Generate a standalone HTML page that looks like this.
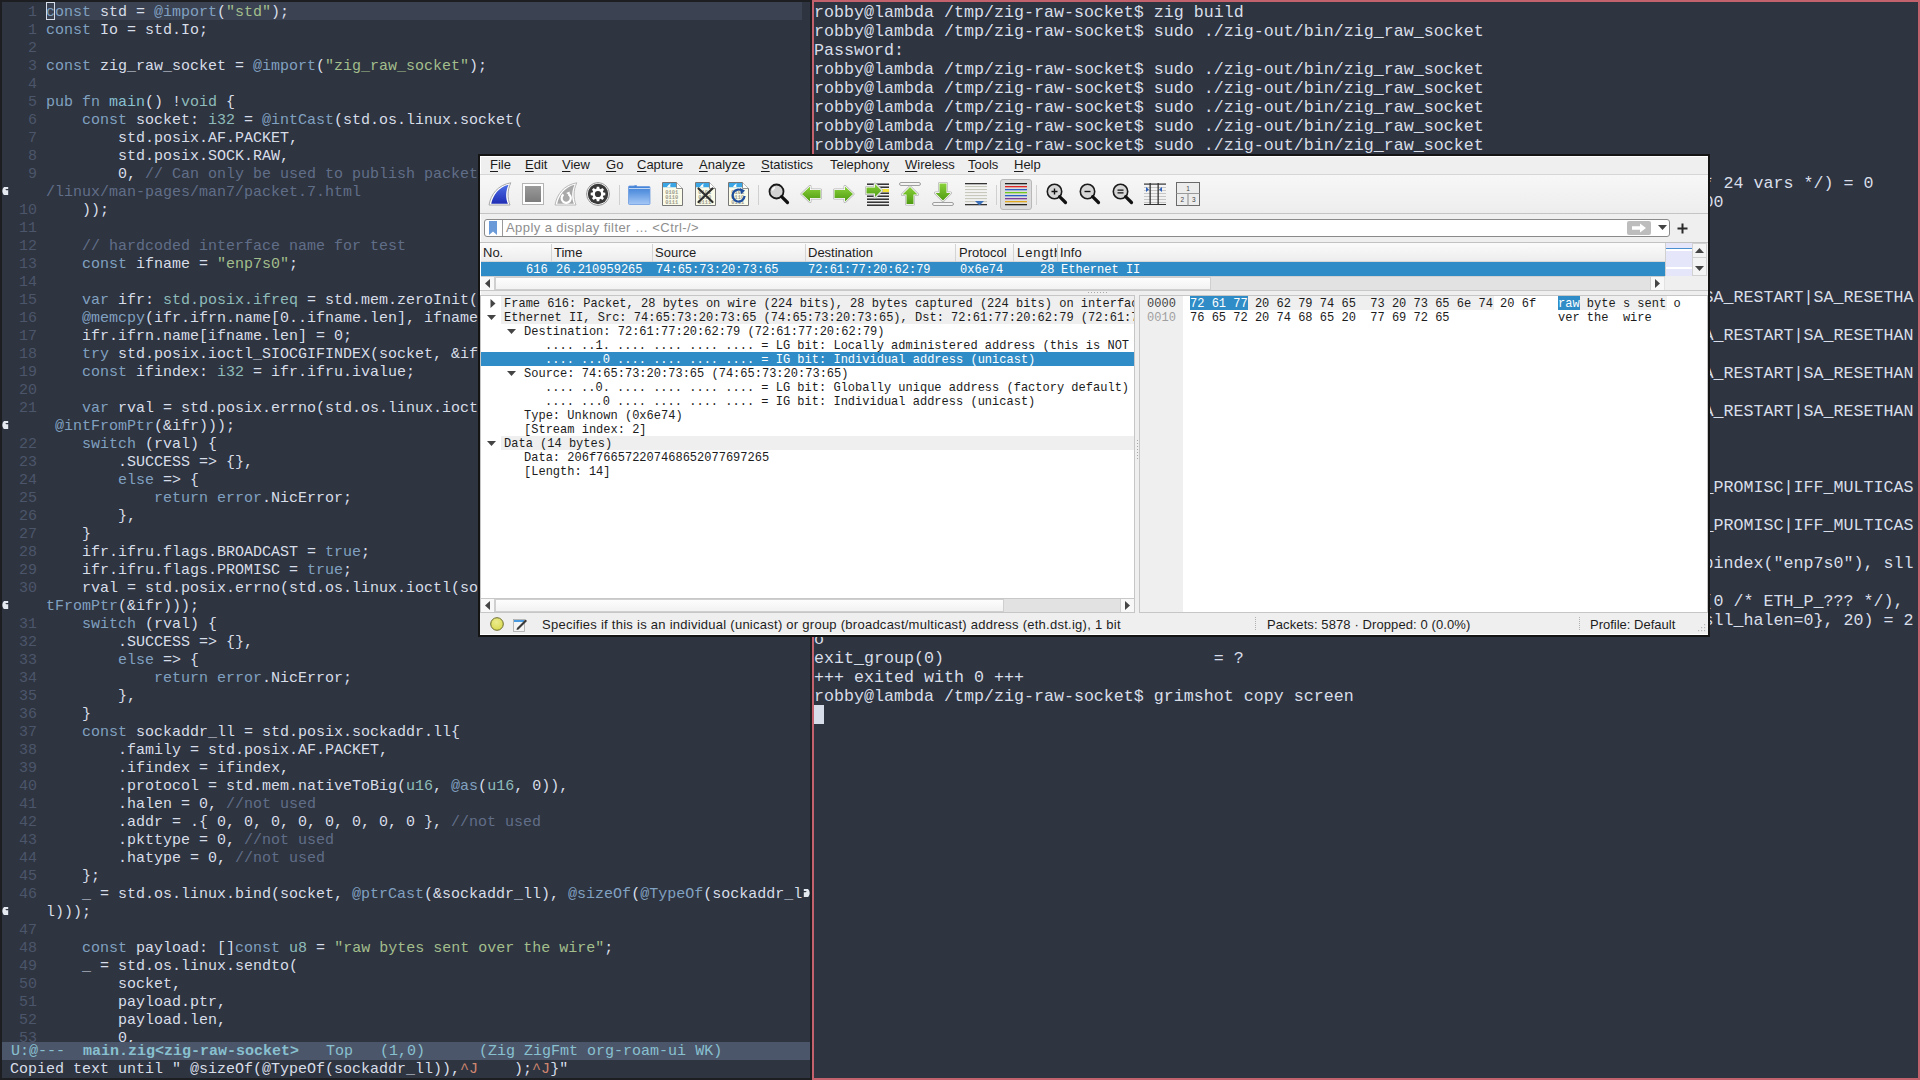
<!DOCTYPE html>
<html><head><meta charset="utf-8"><style>
*{margin:0;padding:0;box-sizing:border-box}
html,body{width:1920px;height:1080px;overflow:hidden;background:#1c1e22}
body{position:relative}
#emacs{position:absolute;left:2px;top:2px;width:808px;height:1076px;background:#2e3440;overflow:hidden}
#emacs .hl{position:absolute;left:44px;top:0;width:756px;height:18px;background:#3b4252}
#emacs .lnum{position:absolute;left:8px;top:2px;width:27px;text-align:right;white-space:pre;font:15px/18px "Liberation Mono",monospace;color:#4c566a}
#emacs .code{position:absolute;left:44px;top:2px;white-space:pre;font:15px/18px "Liberation Mono",monospace;color:#d8dee9}
.k{color:#81a1c1}.b{color:#81a1c1}.f{color:#88c0d0}.t{color:#8fbcbb}.s{color:#a3be8c}.c{color:#616e88}
.frl{position:absolute;left:0;width:8px;height:18px}
.frr{position:absolute;left:800px;width:8px;height:18px}
#emacs .cursor{position:absolute;left:44px;top:0;width:9px;height:18px;border:1px solid #d8dee9}
#emacs .modeline{position:absolute;left:0;top:1040px;width:808px;height:18px;background:#4c566a;color:#88c0d0;white-space:pre;font:15px/18px "Liberation Mono",monospace;padding-top:1px}
#emacs .modeline b{font-weight:bold}
#emacs .echo{position:absolute;left:8px;top:1059px;white-space:pre;font:15px/18px "Liberation Mono",monospace;color:#d8dee9}
#emacs .echo .o{color:#d08770}
#term{position:absolute;left:812px;top:0;width:1108px;height:1080px;background:#2e3440;border:2px solid #c3626c;overflow:hidden}
#term .tt{position:absolute;left:0;top:1px;white-space:pre;font:16.667px/19px "Liberation Mono",monospace;color:#d8dee9}
#term .tcur{position:absolute;left:0;top:703px;width:10px;height:19px;background:#d8dee9}

#ws{position:absolute;left:478px;top:154px;width:1232px;height:483px;background:#141414}
.a{position:absolute}
.ws-in{position:absolute;left:2px;top:2px;width:1228px;height:479px;background:#efefef;overflow:hidden;border-left:1px solid #fff;border-top:1px solid #fff}
.menu{font:13px/18px "Liberation Sans",sans-serif;color:#1c1c1c;white-space:pre}
.menu u{text-decoration:underline;text-underline-offset:1.5px;text-decoration-thickness:1px}
.hdr{font:13px/18px "Liberation Sans",sans-serif;color:#1c1c1c;white-space:pre}
.mono{font:12.03px/14px "Liberation Mono",monospace;white-space:pre;color:#1c1c1c}
.st{font:13px/22px "Liberation Sans",sans-serif;color:#1c1c1c;white-space:pre}
</style></head><body>
<div id="emacs">
<div class="hl"></div>
<div class="lnum">1
1
2
3
4
5
6
7
8
9

10
11
12
13
14
15
16
17
18
19
20
21

22
23
24
25
26
27
28
29
30

31
32
33
34
35
36
37
38
39
40
41
42
43
44
45
46

47
48
49
50
51
52
53</div>
<div class="code"><span class="k">const</span> std = <span class="b">@import</span>(<span class="s">&quot;std&quot;</span>);
<span class="k">const</span> Io = std.Io;

<span class="k">const</span> zig_raw_socket = <span class="b">@import</span>(<span class="s">&quot;zig_raw_socket&quot;</span>);

<span class="k">pub</span> <span class="k">fn</span> <span class="f">main</span>() !<span class="t">void</span> {
    <span class="k">const</span> socket: <span class="t">i32</span> = <span class="b">@intCast</span>(std.os.linux.socket(
        std.posix.AF.PACKET,
        std.posix.SOCK.RAW,
        0, <span class="c">// Can only be used to publish packets. See man7 dot org website /man</span>
<span class="c">/linux/man-pages/man7/packet.7.html</span>
    ));

    <span class="c">// hardcoded interface name for test</span>
    <span class="k">const</span> ifname = <span class="s">&quot;enp7s0&quot;</span>;

    <span class="k">var</span> ifr: <span class="t">std.posix.ifreq</span> = std.mem.zeroInit(std.posix.ifreq, .{});
    <span class="b">@memcpy</span>(ifr.ifrn.name[0..ifname.len], ifname);
    ifr.ifrn.name[ifname.len] = 0;
    <span class="k">try</span> std.posix.ioctl_SIOCGIFINDEX(socket, &amp;ifr);
    <span class="k">const</span> ifindex: <span class="t">i32</span> = ifr.ifru.ivalue;

    <span class="k">var</span> rval = std.posix.errno(std.os.linux.ioctl(socket, std.os.linux.SIOCGIFFLAGS,
 <span class="b">@intFromPtr</span>(&amp;ifr)));
    <span class="k">switch</span> (rval) {
        .SUCCESS =&gt; {},
        <span class="k">else</span> =&gt; {
            <span class="k">return</span> <span class="k">error</span>.NicError;
        },
    }
    ifr.ifru.flags.BROADCAST = <span class="k">true</span>;
    ifr.ifru.flags.PROMISC = <span class="k">true</span>;
    rval = std.posix.errno(std.os.linux.ioctl(socket, std.os.linux.SIOCSIFFLAGS, <span class="b">@in</span>
<span class="b">tFromPtr</span>(&amp;ifr)));
    <span class="k">switch</span> (rval) {
        .SUCCESS =&gt; {},
        <span class="k">else</span> =&gt; {
            <span class="k">return</span> <span class="k">error</span>.NicError;
        },
    }
    <span class="k">const</span> sockaddr_ll = std.posix.sockaddr.ll{
        .family = std.posix.AF.PACKET,
        .ifindex = ifindex,
        .protocol = std.mem.nativeToBig(<span class="t">u16</span>, <span class="b">@as</span>(<span class="t">u16</span>, 0)),
        .halen = 0, <span class="c">//not used</span>
        .addr = .{ 0, 0, 0, 0, 0, 0, 0, 0 }, <span class="c">//not used</span>
        .pkttype = 0, <span class="c">//not used</span>
        .hatype = 0, <span class="c">//not used</span>
    };
    _ = std.os.linux.bind(socket, <span class="b">@ptrCast</span>(&amp;sockaddr_ll), <span class="b">@sizeOf</span>(<span class="b">@TypeOf</span>(sockaddr_l
l)));

    <span class="k">const</span> payload: []<span class="k">const</span> <span class="t">u8</span> = <span class="s">&quot;raw bytes sent over the wire&quot;</span>;
    _ = std.os.linux.sendto(
        socket,
        payload.ptr,
        payload.len,
        0,</div>
<div class="frl" style="top:180px"><svg width="8" height="18"><path d="M2 5 H6.2 V6.9 H2.9 Q4 7.3 4.8 8.4 L6.2 7.9 V13 H1.8 Q0.3 11.2 0.3 9 Q0.3 6.6 2 5 Z" fill="#e5e9f0"/></svg></div>
<div class="frl" style="top:414px"><svg width="8" height="18"><path d="M2 5 H6.2 V6.9 H2.9 Q4 7.3 4.8 8.4 L6.2 7.9 V13 H1.8 Q0.3 11.2 0.3 9 Q0.3 6.6 2 5 Z" fill="#e5e9f0"/></svg></div>
<div class="frl" style="top:594px"><svg width="8" height="18"><path d="M2 5 H6.2 V6.9 H2.9 Q4 7.3 4.8 8.4 L6.2 7.9 V13 H1.8 Q0.3 11.2 0.3 9 Q0.3 6.6 2 5 Z" fill="#e5e9f0"/></svg></div>
<div class="frl" style="top:900px"><svg width="8" height="18"><path d="M2 5 H6.2 V6.9 H2.9 Q4 7.3 4.8 8.4 L6.2 7.9 V13 H1.8 Q0.3 11.2 0.3 9 Q0.3 6.6 2 5 Z" fill="#e5e9f0"/></svg></div>
<div class="frr" style="top:882px"><svg width="8" height="18"><path d="M6 5 H1.8 V6.9 H5.1 Q4 7.3 3.2 8.4 L1.8 7.9 V13 H6.2 Q7.7 11.2 7.7 9 Q7.7 6.6 6 5 Z" fill="#e5e9f0"/></svg></div>
<div class="cursor"></div>
<div class="modeline"> U:@---  <b>main.zig&lt;zig-raw-socket&gt;</b>   Top   (1,0)      (Zig ZigFmt org-roam-ui WK)</div>
<div class="echo">Copied text until " @sizeOf(@TypeOf(sockaddr_ll)),<span class="o">^J</span>    );<span class="o">^J</span>}"</div>
</div>
<div id="term"><div class="tt">robby@lambda /tmp/zig-raw-socket$ zig build
robby@lambda /tmp/zig-raw-socket$ sudo ./zig-out/bin/zig_raw_socket
Password:
robby@lambda /tmp/zig-raw-socket$ sudo ./zig-out/bin/zig_raw_socket
robby@lambda /tmp/zig-raw-socket$ sudo ./zig-out/bin/zig_raw_socket
robby@lambda /tmp/zig-raw-socket$ sudo ./zig-out/bin/zig_raw_socket
robby@lambda /tmp/zig-raw-socket$ sudo ./zig-out/bin/zig_raw_socket
robby@lambda /tmp/zig-raw-socket$ sudo ./zig-out/bin/zig_raw_socket

                                                                                        /* 24 vars */) = 0
                                                                                         00




                                                                                         SA_RESTART|SA_RESETHA

                                                                                        SA_RESTART|SA_RESETHAN

                                                                                        SA_RESTART|SA_RESETHAN

                                                                                        SA_RESTART|SA_RESETHAN



                                                                                        F_PROMISC|IFF_MULTICAS

                                                                                        F_PROMISC|IFF_MULTICAS

                                                                                        ypindex(&quot;enp7s0&quot;), sll

                                                                                        s(0 /* ETH_P_??? */),
                                                                                        {sll_halen=0}, 20) = 2
o
exit_group(0)                           = ?
+++ exited with 0 +++
robby@lambda /tmp/zig-raw-socket$ grimshot copy screen</div><div class="tcur"></div></div>
<div id="ws"></div>
<div class="a" style="left:480px;top:156px;width:1228px;height:479px;background:#efefef;border-left:1px solid #fff;border-top:1px solid #fff"></div>
<div class="a menu" style="left:490px;top:156px;"><u>F</u>ile</div>
<div class="a menu" style="left:525px;top:156px;"><u>E</u>dit</div>
<div class="a menu" style="left:562px;top:156px;"><u>V</u>iew</div>
<div class="a menu" style="left:606px;top:156px;"><u>G</u>o</div>
<div class="a menu" style="left:637px;top:156px;"><u>C</u>apture</div>
<div class="a menu" style="left:699px;top:156px;"><u>A</u>nalyze</div>
<div class="a menu" style="left:761px;top:156px;"><u>S</u>tatistics</div>
<div class="a menu" style="left:830px;top:156px;">Telephon<u>y</u></div>
<div class="a menu" style="left:905px;top:156px;"><u>W</u>ireless</div>
<div class="a menu" style="left:968px;top:156px;"><u>T</u>ools</div>
<div class="a menu" style="left:1014px;top:156px;"><u>H</u>elp</div>
<div class="a" style="left:480px;top:174px;width:1228px;height:1px;background:#d6d6d6"></div>
<div class="a" style="left:480px;top:175px;width:1228px;height:38px;background:linear-gradient(#f7f7f7,#ededed)"></div>
<div class="a" style="left:480px;top:213px;width:1228px;height:1px;background:#c4c4c4"></div>
<svg class="a" style="left:0;top:0" width="1" height="1"><defs>
<linearGradient id="gblue" x1="0" y1="0" x2="0" y2="1"><stop offset="0" stop-color="#4d6ee6"/><stop offset="1" stop-color="#1f2db4"/></linearGradient>
<linearGradient id="ggrey" x1="0" y1="0" x2="0" y2="1"><stop offset="0" stop-color="#9a9a9a"/><stop offset="1" stop-color="#7c7c7c"/></linearGradient>
<linearGradient id="gfold" x1="0" y1="0" x2="0" y2="1"><stop offset="0" stop-color="#3d7fd6"/><stop offset="0.35" stop-color="#5b95e0"/><stop offset="1" stop-color="#a6c8f5"/></linearGradient>
<linearGradient id="ggreen" x1="0" y1="0" x2="0" y2="1"><stop offset="0" stop-color="#8ad23a"/><stop offset="1" stop-color="#4e9a12"/></linearGradient>
<linearGradient id="gtb" x1="0" y1="0" x2="0" y2="1"><stop offset="0" stop-color="#f8f8f8"/><stop offset="1" stop-color="#ececec"/></linearGradient>
</defs></svg>
<svg class="a" style="left:488px;top:182px" width="24" height="24" viewBox="0 0 24 24"><path d="M1 23 C3 12 10 3 22.8 0.8 C19.3 8 19.3 16 22 23 Z" fill="#fff" stroke="#a8a8a8" stroke-width="1"/><path d="M3.2 21.8 C5 13 11 5 20.6 2.8 C17.6 9 17.4 16 19.9 21.8 Z" fill="url(#gblue)"/></svg>
<svg class="a" style="left:522px;top:183px" width="22" height="22" viewBox="0 0 22 22"><rect x="0.5" y="0.5" width="21" height="21" fill="#fff" stroke="#b4b4b4"/><rect x="3" y="3" width="16" height="16" fill="url(#ggrey)"/></svg>
<svg class="a" style="left:554px;top:182px" width="24" height="24" viewBox="0 0 24 24"><path d="M1 23 C3 12 10 3 22.8 0.8 C19.3 8 19.3 16 22 23 Z" fill="#fff" stroke="#b8b8b8" stroke-width="1"/><path d="M3.2 21.8 C5 13 11 5 20.6 2.8 C17.6 9 17.4 16 19.9 21.8 Z" fill="#a9a9a9"/><path d="M9.5 12.5 A4.6 4.6 0 1 0 14.5 12.2" stroke="#fff" stroke-width="2.2" fill="none"/><path d="M12.2 11 L15.6 9.6 L15.8 13.6 Z" fill="#fff"/></svg>
<svg class="a" style="left:586px;top:182px" width="24" height="24" viewBox="0 0 24 24"><circle cx="12" cy="12" r="11.4" fill="#fff" stroke="#8a8a8a" stroke-width="0.9"/><circle cx="12" cy="12" r="10.2" fill="#383838"/><path d="M17.41 10.56 L19.29 10.75 L19.29 13.25 L17.41 13.44 L16.84 14.81 L18.04 16.27 L16.27 18.04 L14.81 16.84 L13.44 17.41 L13.25 19.29 L10.75 19.29 L10.56 17.41 L9.19 16.84 L7.73 18.04 L5.96 16.27 L7.16 14.81 L6.59 13.44 L4.71 13.25 L4.71 10.75 L6.59 10.56 L7.16 9.19 L5.96 7.73 L7.73 5.96 L9.19 7.16 L10.56 6.59 L10.75 4.71 L13.25 4.71 L13.44 6.59 L14.81 7.16 L16.27 5.96 L18.04 7.73 L16.84 9.19 Z" fill="#fff"/><circle cx="12" cy="12" r="3.1" fill="#353535"/></svg>
<div class="a" style="left:619px;top:185px;width:1px;height:20px;background:#d0d0d0"></div>
<div class="a" style="left:758px;top:185px;width:1px;height:20px;background:#d0d0d0"></div>
<div class="a" style="left:996px;top:185px;width:1px;height:20px;background:#d0d0d0"></div>
<div class="a" style="left:1036px;top:185px;width:1px;height:20px;background:#d0d0d0"></div>
<svg class="a" style="left:628px;top:185px" width="23" height="20" viewBox="0 0 23 20"><path d="M0.5 2 Q0.5 1 1.5 1 H6 L7 0.5 H8.5 L9 1.5 H21 Q22 1.5 22 2.5 V18.5 Q22 19.5 21 19.5 H1.5 Q0.5 19.5 0.5 18.5 Z" fill="url(#gfold)" stroke="#6c9be0" stroke-width="0.8"/><rect x="1" y="3" width="21" height="0.9" fill="#cfe0f8"/></svg>
<svg class="a" style="left:662px;top:182px" width="21" height="24" viewBox="0 0 21 24"><path d="M0.5 0.5 H14.5 L20.5 6.5 V23.5 H0.5 Z" fill="#fbfbe9" stroke="#777" stroke-width="1"/><path d="M1 1 H14.3 L16.5 3.2 V5.2 H1 Z" fill="#3aa6e6"/><path d="M5 5 C6 3.2 7.5 2 9 1.6 C8 3 8 4.2 8.6 5 Z" fill="#fff"/><path d="M14.5 0.5 V6.5 H20.5" fill="#fff" stroke="#777" stroke-width="0.8"/><g fill="#9a9a8c" font-family="Liberation Mono" font-size="5.4" font-weight="bold"><text x="3.2" y="11.5">0101</text><text x="3.2" y="16.5">0110</text><text x="3.2" y="21.5">0111</text></g></svg>
<svg class="a" style="left:695px;top:182px" width="21" height="24" viewBox="0 0 21 24"><path d="M0.5 0.5 H14.5 L20.5 6.5 V23.5 H0.5 Z" fill="#fbfbe9" stroke="#777" stroke-width="1"/><path d="M1 1 H14.3 L16.5 3.2 V5.2 H1 Z" fill="#3aa6e6"/><path d="M5 5 C6 3.2 7.5 2 9 1.6 C8 3 8 4.2 8.6 5 Z" fill="#fff"/><path d="M14.5 0.5 V6.5 H20.5" fill="#fff" stroke="#777" stroke-width="0.8"/><g fill="#9a9a8c" font-family="Liberation Mono" font-size="5.4" font-weight="bold"><text x="3.2" y="11.5">0101</text><text x="3.2" y="16.5">0110</text><text x="3.2" y="21.5">0111</text></g><path d="M3.5 6.5 L17.5 20 M17.5 6.5 L3.5 20" stroke="#2e2e2e" stroke-width="2.2" stroke-linecap="round"/></svg>
<svg class="a" style="left:728px;top:182px" width="21" height="24" viewBox="0 0 21 24"><path d="M0.5 0.5 H14.5 L20.5 6.5 V23.5 H0.5 Z" fill="#fbfbe9" stroke="#777" stroke-width="1"/><path d="M1 1 H14.3 L16.5 3.2 V5.2 H1 Z" fill="#3aa6e6"/><path d="M5 5 C6 3.2 7.5 2 9 1.6 C8 3 8 4.2 8.6 5 Z" fill="#fff"/><path d="M14.5 0.5 V6.5 H20.5" fill="#fff" stroke="#777" stroke-width="0.8"/><g fill="#9a9a8c" font-family="Liberation Mono" font-size="5.4" font-weight="bold"><text x="3.2" y="11.5">0101</text><text x="3.2" y="16.5">0110</text><text x="3.2" y="21.5">0111</text></g><path d="M14.8 9.2 A6 6 0 1 0 16.6 14" stroke="#1e4d9c" stroke-width="2.2" fill="none"/><path d="M12 6 L17 8.5 L13.2 12.2 Z" fill="#1e4d9c"/></svg>
<svg class="a" style="left:768px;top:183px" width="22" height="22" viewBox="0 0 22 22"><circle cx="8.5" cy="8.5" r="7" fill="#d4d4d4" stroke="#1a1a1a" stroke-width="1.8"/><path d="M7 4.5 A4 4 0 0 0 4.5 7.5" stroke="#fff" stroke-width="1.4" fill="none"/><path d="M13.6 13.6 L19.5 19.5" stroke="#111" stroke-width="3.2" stroke-linecap="round"/></svg>
<svg class="a" style="left:800px;top:185px" width="22" height="18" viewBox="0 0 22 18"><path d="M2 9 L10 1.5 V5 H20.5 V13 H10 V16.5 Z" fill="none" stroke="#b4b4b4" stroke-width="3" stroke-linejoin="round"/><path d="M2 9 L10 1.5 V5 H20.5 V13 H10 V16.5 Z" fill="none" stroke="#fff" stroke-width="1.5" stroke-linejoin="round"/><path d="M2 9 L10 1.5 V5 H20.5 V13 H10 V16.5 Z" fill="url(#ggreen)"/></svg>
<svg class="a" style="left:833px;top:185px" width="22" height="18" viewBox="0 0 22 18"><path d="M20 9 L12 1.5 V5 H1.5 V13 H12 V16.5 Z" fill="none" stroke="#b4b4b4" stroke-width="3" stroke-linejoin="round"/><path d="M20 9 L12 1.5 V5 H1.5 V13 H12 V16.5 Z" fill="none" stroke="#fff" stroke-width="1.5" stroke-linejoin="round"/><path d="M20 9 L12 1.5 V5 H1.5 V13 H12 V16.5 Z" fill="url(#ggreen)"/></svg>
<svg class="a" style="left:865px;top:182px" width="24" height="24" viewBox="0 0 24 24"><rect x="2" y="1.5" width="22" height="1.4" fill="#222"/><rect x="2" y="4.5" width="22" height="1.4" fill="#222"/><rect x="2" y="7.5" width="22" height="1.4" fill="#222"/><rect x="2" y="10.5" width="22" height="1.4" fill="#222"/><rect x="2" y="13.5" width="22" height="1.4" fill="#222"/><rect x="2" y="16.5" width="22" height="1.4" fill="#222"/><rect x="2" y="19.5" width="22" height="1.4" fill="#222"/><rect x="2" y="22.5" width="22" height="1.4" fill="#222"/><rect x="14" y="7" width="10" height="3" fill="#f2e03a"/><path d="M16.5 8.5 L10 2 V5.5 H1.5 V11.5 H10 V15 Z" fill="none" stroke="#b4b4b4" stroke-width="3" stroke-linejoin="round"/><path d="M16.5 8.5 L10 2 V5.5 H1.5 V11.5 H10 V15 Z" fill="none" stroke="#fff" stroke-width="1.5" stroke-linejoin="round"/><path d="M16.5 8.5 L10 2 V5.5 H1.5 V11.5 H10 V15 Z" fill="url(#ggreen)"/></svg>
<svg class="a" style="left:899px;top:182px" width="22" height="24" viewBox="0 0 22 24"><rect x="0.6" y="0.6" width="20.8" height="2.8" rx="1.3" fill="#fff" stroke="#8a8a8a" stroke-width="0.9"/><path d="M11 5 L18.5 12.5 H14.5 V22 H7.5 V12.5 H3.5 Z" fill="none" stroke="#b4b4b4" stroke-width="3" stroke-linejoin="round"/><path d="M11 5 L18.5 12.5 H14.5 V22 H7.5 V12.5 H3.5 Z" fill="none" stroke="#fff" stroke-width="1.5" stroke-linejoin="round"/><path d="M11 5 L18.5 12.5 H14.5 V22 H7.5 V12.5 H3.5 Z" fill="url(#ggreen)"/></svg>
<svg class="a" style="left:932px;top:182px" width="22" height="24" viewBox="0 0 22 24"><path d="M7.5 1.5 H14.5 V11 H18.5 L11 18.5 L3.5 11 H7.5 Z" fill="none" stroke="#b4b4b4" stroke-width="3" stroke-linejoin="round"/><path d="M7.5 1.5 H14.5 V11 H18.5 L11 18.5 L3.5 11 H7.5 Z" fill="none" stroke="#fff" stroke-width="1.5" stroke-linejoin="round"/><path d="M7.5 1.5 H14.5 V11 H18.5 L11 18.5 L3.5 11 H7.5 Z" fill="url(#ggreen)"/><rect x="0.6" y="20.6" width="20.8" height="2.8" rx="1.3" fill="#fff" stroke="#8a8a8a" stroke-width="0.9"/></svg>
<svg class="a" style="left:965px;top:182px" width="22" height="24" viewBox="0 0 22 24"><rect x="0" y="1" width="22" height="1.3" fill="#333"/><rect x="0" y="4" width="22" height="1.1" fill="#c8c8bc"/><rect x="0" y="7" width="22" height="1.1" fill="#c8c8bc"/><rect x="0" y="10" width="22" height="1.1" fill="#c8c8bc"/><rect x="0" y="13" width="22" height="1.1" fill="#c8c8bc"/><rect x="0" y="16" width="22" height="1.1" fill="#c8c8bc"/><rect x="0" y="19" width="22" height="1.1" fill="#c8c8bc"/><rect x="0" y="22" width="22" height="1.3" fill="#333"/><path d="M10 19 H19 L15 23 H14 Z" fill="#3b6fb8"/></svg>
<div class="a" style="left:1000px;top:179px;width:32px;height:31px;background:#dcdcdc;border:1px solid #b8b8b8;border-radius:3px"></div>
<svg class="a" style="left:1005px;top:183px" width="22" height="23" viewBox="0 0 22 23"><rect x="0" y="0" width="22" height="1.3" fill="#222"/><rect x="0" y="3" width="22" height="1.3" fill="#e02424"/><rect x="0" y="6" width="22" height="1.3" fill="#2a5fc8"/><rect x="0" y="9" width="22" height="1.3" fill="#6ec81e"/><rect x="0" y="12" width="22" height="1.3" fill="#2a5fc8"/><rect x="0" y="15" width="22" height="1.3" fill="#7a3f9a"/><rect x="0" y="18" width="22" height="1.3" fill="#e0a81e"/><rect x="0" y="21" width="22" height="1.3" fill="#222"/></svg>
<svg class="a" style="left:1046px;top:183px" width="22" height="22" viewBox="0 0 22 22"><circle cx="8.5" cy="8.5" r="7.2" fill="#d6d6d6" stroke="#1a1a1a" stroke-width="1.6"/><path d="M13.6 13.6 L19.5 19.5" stroke="#111" stroke-width="3.2" stroke-linecap="round"/><path d="M5.5 8.5 H11.5 M8.5 5.5 V11.5" stroke="#111" stroke-width="1.4"/></svg>
<svg class="a" style="left:1079px;top:183px" width="22" height="22" viewBox="0 0 22 22"><circle cx="8.5" cy="8.5" r="7.2" fill="#d6d6d6" stroke="#1a1a1a" stroke-width="1.6"/><path d="M13.6 13.6 L19.5 19.5" stroke="#111" stroke-width="3.2" stroke-linecap="round"/><path d="M5.5 8.5 H11.5" stroke="#111" stroke-width="1.4"/></svg>
<svg class="a" style="left:1112px;top:183px" width="22" height="22" viewBox="0 0 22 22"><circle cx="8.5" cy="8.5" r="7.2" fill="#d6d6d6" stroke="#1a1a1a" stroke-width="1.6"/><path d="M13.6 13.6 L19.5 19.5" stroke="#111" stroke-width="3.2" stroke-linecap="round"/><path d="M5.5 7.2 H11.5 M5.5 9.8 H11.5" stroke="#111" stroke-width="1.2"/></svg>
<svg class="a" style="left:1144px;top:183px" width="22" height="22" viewBox="0 0 22 22"><rect x="0" y="0.5" width="22" height="1.2" fill="#333"/><rect x="0" y="4" width="22" height="1" fill="#c6c6c6"/><rect x="0" y="7" width="22" height="1" fill="#c6c6c6"/><rect x="0" y="10" width="22" height="1" fill="#c6c6c6"/><rect x="0" y="13" width="22" height="1" fill="#c6c6c6"/><rect x="0" y="16" width="22" height="1" fill="#c6c6c6"/><rect x="0" y="19" width="22" height="1" fill="#c6c6c6"/><rect x="0" y="21" width="22" height="1.2" fill="#333"/><rect x="5.5" y="0" width="1.3" height="22" fill="#333"/><rect x="13.5" y="0" width="1.3" height="22" fill="#333"/><path d="M2 4 L5 6.5 L2 9 Z M18 4 L15 6.5 L18 9 Z" fill="#2f62b8"/></svg>
<svg class="a" style="left:1176px;top:182px" width="24" height="24" viewBox="0 0 24 24"><rect x="0.5" y="0.5" width="23" height="23" fill="#ececec" stroke="#6a6a6a"/><path d="M0.5 11.5 H23.5 M12 11.5 V23.5" stroke="#999" stroke-width="1.2"/><text x="12" y="9" font-size="6.5" text-anchor="middle" fill="#444" font-family="Liberation Sans">1</text><text x="6.3" y="20" font-size="6.5" text-anchor="middle" fill="#444" font-family="Liberation Sans">2</text><text x="17.7" y="20" font-size="6.5" text-anchor="middle" fill="#444" font-family="Liberation Sans">3</text></svg>
<div class="a" style="left:484px;top:219px;width:1186px;height:18px;background:#fff;border:1px solid #8a8a8a;border-radius:3px"></div>
<div class="a" style="left:502px;top:220px;width:1px;height:16px;background:#9a9a9a"></div>
<svg class="a" style="left:489px;top:221px" width="8" height="14" viewBox="0 0 8 14"><path d="M0 0 H8 V14 L4 10.5 L0 14 Z" fill="#6a9ad8"/></svg>
<div class="a hdr" style="left:506px;top:218px;color:#8e8e8e;line-height:19px;letter-spacing:0.42px">Apply a display filter … &lt;Ctrl-/&gt;</div>
<div class="a" style="left:1627px;top:221px;width:24px;height:14px;background:#bdbdbd;border-radius:2px"></div>
<svg class="a" style="left:1631px;top:223px" width="16" height="10" viewBox="0 0 16 10"><path d="M1 3.2 H9 V0.6 L15 5 L9 9.4 V6.8 H1 Z" fill="#fff"/></svg>
<svg class="a" style="left:1658px;top:225px" width="9" height="5" viewBox="0 0 9 5"><path d="M0 0 H9 L4.5 5 Z" fill="#444"/></svg>
<svg class="a" style="left:1677px;top:223px" width="11" height="11" viewBox="0 0 11 11"><path d="M5.5 0.5 V10.5 M0.5 5.5 H10.5" stroke="#2a2a2a" stroke-width="2"/></svg>
<div class="a" style="left:480px;top:242px;width:1228px;height:1px;background:#c2c2c2"></div>
<div class="a" style="left:481px;top:243px;width:1184px;height:19px;background:linear-gradient(#fbfbfb,#ededed);border-bottom:1px solid #d8d8d8"></div>
<div class="a hdr" style="left:483px;top:244px;">No.</div>
<div class="a hdr" style="left:554px;top:244px;">Time</div>
<div class="a hdr" style="left:655px;top:244px;">Source</div>
<div class="a hdr" style="left:808px;top:244px;">Destination</div>
<div class="a hdr" style="left:959px;top:244px;">Protocol</div>
<div class="a hdr" style="left:1060px;top:244px;">Info</div>
<div class="a" style="left:1013px;top:243px;width:44px;height:19px;overflow:hidden"><div class="a hdr" style="left:4px;top:1px;letter-spacing:0.9px">Length</div></div>
<div class="a" style="left:551px;top:244px;width:1px;height:18px;background:#d4d4d4"></div>
<div class="a" style="left:652px;top:244px;width:1px;height:18px;background:#d4d4d4"></div>
<div class="a" style="left:805px;top:244px;width:1px;height:18px;background:#d4d4d4"></div>
<div class="a" style="left:955px;top:244px;width:1px;height:18px;background:#d4d4d4"></div>
<div class="a" style="left:1013px;top:244px;width:1px;height:18px;background:#d4d4d4"></div>
<div class="a" style="left:1057px;top:244px;width:1px;height:18px;background:#d4d4d4"></div>
<div class="a" style="left:481px;top:262px;width:1184px;height:14px;background:#308cc6"></div>
<div class="a mono" style="left:526px;top:263px;color:#fff">616</div>
<div class="a mono" style="left:556px;top:263px;color:#fff">26.210959265</div>
<div class="a mono" style="left:656px;top:263px;color:#fff">74:65:73:20:73:65</div>
<div class="a mono" style="left:808px;top:263px;color:#fff">72:61:77:20:62:79</div>
<div class="a mono" style="left:960px;top:263px;color:#fff">0x6e74</div>
<div class="a mono" style="left:1040px;top:263px;color:#fff">28</div>
<div class="a mono" style="left:1061px;top:263px;color:#fff">Ethernet II</div>
<div class="a" style="left:1665px;top:243px;width:27px;height:33px;background:#e6e6fa;border-left:1px solid #d0d0d0"></div>
<div class="a" style="left:1666px;top:248px;width:26px;height:1px;background:#4a90d0"></div>
<div class="a" style="left:1666px;top:249px;width:26px;height:2px;background:#fff"></div>
<div class="a" style="left:1666px;top:267px;width:26px;height:2px;background:#fff"></div>
<div class="a" style="left:1692px;top:243px;width:15px;height:33px;background:#f4f4f4;border:1px solid #d2d2d2"></div>
<svg class="a" style="left:1695px;top:248px" width="9" height="5" viewBox="0 0 9 5"><path d="M0 5 H9 L4.5 0 Z" fill="#444"/></svg>
<svg class="a" style="left:1695px;top:266px" width="9" height="5" viewBox="0 0 9 5"><path d="M0 0 H9 L4.5 5 Z" fill="#444"/></svg>
<div class="a" style="left:1693px;top:257px;width:13px;height:1px;background:#d2d2d2"></div>
<div class="a" style="left:481px;top:276px;width:1184px;height:14px;background:#e2e2e2;border-top:1px solid #d0d0d0"></div>
<div class="a" style="left:495px;top:277px;width:716px;height:13px;background:linear-gradient(#fdfdfd,#f2f2f2);border:1px solid #cfcfcf"></div>
<div class="a" style="left:481px;top:277px;width:14px;height:13px;background:#f8f8f8;border-right:1px solid #cfcfcf"></div>
<svg class="a" style="left:485px;top:279px" width="5" height="9" viewBox="0 0 5 9"><path d="M5 0 V9 L0 4.5 Z" fill="#444"/></svg>
<div class="a" style="left:1650px;top:277px;width:14px;height:13px;background:#f8f8f8;border-left:1px solid #cfcfcf"></div>
<svg class="a" style="left:1655px;top:279px" width="5" height="9" viewBox="0 0 5 9"><path d="M0 0 V9 L5 4.5 Z" fill="#444"/></svg>
<div class="a" style="left:480px;top:290px;width:1228px;height:1px;background:#c8c8c8"></div>
<div class="a" style="left:1088px;top:292px;width:20px;height:1px;background:repeating-linear-gradient(90deg,#a8a8a8 0 1px,transparent 1px 3px)"></div>
<div class="a" style="left:480px;top:295px;width:655px;height:318px;background:#fff;border:1px solid #c6c6c6"></div>
<div class="a" style="left:501px;top:296px;width:633px;height:28px;background:#efefef"></div>
<div class="a" style="left:501px;top:436px;width:633px;height:14px;background:#efefef"></div>
<div class="a" style="left:481px;top:352px;width:653px;height:14px;background:#308cc6"></div>
<div class="a" style="left:481px;top:296px;width:653px;height:302px;overflow:hidden"><div class="a mono" style="left:23px;top:1px;color:#1c1c1c">Frame 616: Packet, 28 bytes on wire (224 bits), 28 bytes captured (224 bits) on interface</div>
<svg class="a" style="left:9px;top:3px" width="6" height="9" viewBox="0 0 6 9"><path d="M0.5 0 V9 L5.5 4.5 Z" fill="#444"/></svg>
<div class="a mono" style="left:23px;top:15px;color:#1c1c1c">Ethernet II, Src: 74:65:73:20:73:65 (74:65:73:20:73:65), Dst: 72:61:77:20:62:79 (72:61:77:20:62:79)</div>
<svg class="a" style="left:6px;top:19px" width="9" height="5" viewBox="0 0 9 5"><path d="M0 0 H9 L4.5 5 Z" fill="#444"/></svg>
<div class="a mono" style="left:43px;top:29px;color:#1c1c1c">Destination: 72:61:77:20:62:79 (72:61:77:20:62:79)</div>
<svg class="a" style="left:26px;top:33px" width="9" height="5" viewBox="0 0 9 5"><path d="M0 0 H9 L4.5 5 Z" fill="#444"/></svg>
<div class="a mono" style="left:64px;top:43px;color:#1c1c1c">.... ..1. .... .... .... .... = LG bit: Locally administered address (this is NOT the factory default)</div>
<div class="a mono" style="left:64px;top:57px;color:#fff">.... ...0 .... .... .... .... = IG bit: Individual address (unicast)</div>
<div class="a mono" style="left:43px;top:71px;color:#1c1c1c">Source: 74:65:73:20:73:65 (74:65:73:20:73:65)</div>
<svg class="a" style="left:26px;top:75px" width="9" height="5" viewBox="0 0 9 5"><path d="M0 0 H9 L4.5 5 Z" fill="#444"/></svg>
<div class="a mono" style="left:64px;top:85px;color:#1c1c1c">.... ..0. .... .... .... .... = LG bit: Globally unique address (factory default)</div>
<div class="a mono" style="left:64px;top:99px;color:#1c1c1c">.... ...0 .... .... .... .... = IG bit: Individual address (unicast)</div>
<div class="a mono" style="left:43px;top:113px;color:#1c1c1c">Type: Unknown (0x6e74)</div>
<div class="a mono" style="left:43px;top:127px;color:#1c1c1c">[Stream index: 2]</div>
<div class="a mono" style="left:23px;top:141px;color:#1c1c1c">Data (14 bytes)</div>
<svg class="a" style="left:6px;top:145px" width="9" height="5" viewBox="0 0 9 5"><path d="M0 0 H9 L4.5 5 Z" fill="#444"/></svg>
<div class="a mono" style="left:43px;top:155px;color:#1c1c1c">Data: 206f766572207468652077697265</div>
<div class="a mono" style="left:43px;top:169px;color:#1c1c1c">[Length: 14]</div></div>
<div class="a" style="left:481px;top:598px;width:653px;height:14px;background:#e2e2e2;border-top:1px solid #c8c8c8"></div>
<div class="a" style="left:495px;top:599px;width:509px;height:13px;background:linear-gradient(#fdfdfd,#f2f2f2);border:1px solid #cfcfcf"></div>
<div class="a" style="left:481px;top:599px;width:14px;height:13px;background:#f8f8f8;border-right:1px solid #cfcfcf"></div>
<svg class="a" style="left:485px;top:601px" width="5" height="9" viewBox="0 0 5 9"><path d="M5 0 V9 L0 4.5 Z" fill="#444"/></svg>
<div class="a" style="left:1120px;top:599px;width:14px;height:13px;background:#f8f8f8;border-left:1px solid #cfcfcf"></div>
<svg class="a" style="left:1125px;top:601px" width="5" height="9" viewBox="0 0 5 9"><path d="M0 0 V9 L5 4.5 Z" fill="#444"/></svg>
<div class="a" style="left:1137px;top:440px;width:1px;height:20px;background:repeating-linear-gradient(180deg,#a8a8a8 0 1px,transparent 1px 3px)"></div>
<div class="a" style="left:1139px;top:295px;width:569px;height:318px;background:#fff;border:1px solid #c6c6c6"></div>
<div class="a" style="left:1140px;top:296px;width:43px;height:316px;background:#efefef"></div>
<div class="a" style="left:1190px;top:296px;width:58px;height:14px;background:#308cc6"></div>
<div class="a" style="left:1248px;top:296px;width:246px;height:14px;background:#efefef"></div>
<div class="a" style="left:1558px;top:296px;width:22px;height:14px;background:#308cc6"></div>
<div class="a" style="left:1580px;top:296px;width:87px;height:14px;background:#efefef"></div>
<div class="a mono" style="left:1147px;top:297px;color:#444">0000</div>
<div class="a mono" style="left:1147px;top:311px;color:#a0a0a0">0010</div>
<div class="a mono" style="left:1190px;top:297px;"><span style="color:#fff">72 61 77</span> 20 62 79 74 65  73 20 73 65 6e 74 20 6f</div>
<div class="a mono" style="left:1190px;top:311px;">76 65 72 20 74 68 65 20  77 69 72 65</div>
<div class="a mono" style="left:1558px;top:297px;"><span style="color:#fff">raw</span> byte s sent o</div>
<div class="a mono" style="left:1558px;top:311px;">ver the  wire</div>
<div class="a" style="left:480px;top:613px;width:1228px;height:22px;background:#efefef;border-bottom:1px solid #fff"></div>
<svg class="a" style="left:490px;top:617px" width="14" height="14" viewBox="0 0 14 14"><defs><radialGradient id="gy" cx="0.45" cy="0.35" r="0.7"><stop offset="0" stop-color="#ecec90"/><stop offset="1" stop-color="#d8d84c"/></radialGradient></defs><circle cx="7" cy="7" r="6.3" fill="url(#gy)" stroke="#6b6b30" stroke-width="1"/></svg>
<svg class="a" style="left:513px;top:617px" width="15" height="15" viewBox="0 0 15 15"><rect x="0.5" y="2.5" width="11" height="12" fill="#f4f4f4" stroke="#a8a8a8" stroke-width="0.8"/><path d="M1 3 H11 V5 H1 Z" fill="#4a9ae0"/><path d="M4 11 L12.5 2.5 L14 4 L5.5 12.5 L3.5 13 Z" fill="#3a3a3a"/></svg>
<div class="a st" style="left:542px;top:614px;letter-spacing:0.26px">Specifies if this is an individual (unicast) or group (broadcast/multicast) address (eth.dst.ig), 1 bit</div>
<div class="a" style="left:1255px;top:617px;width:1px;height:14px;background:repeating-linear-gradient(180deg,#b0b0b0 0 1px,transparent 1px 2px)"></div>
<div class="a st" style="left:1267px;top:614px;letter-spacing:0.1px">Packets: 5878 · Dropped: 0 (0.0%)</div>
<div class="a" style="left:1579px;top:617px;width:1px;height:14px;background:repeating-linear-gradient(180deg,#b0b0b0 0 1px,transparent 1px 2px)"></div>
<div class="a st" style="left:1590px;top:614px;">Profile: Default</div>
<svg class="a" style="left:1696px;top:622px" width="10" height="10" viewBox="0 0 10 10"><rect x="8" y="2" width="1.2" height="1.2" fill="#b8b8b8"/><rect x="5" y="5" width="1.2" height="1.2" fill="#b8b8b8"/><rect x="8" y="5" width="1.2" height="1.2" fill="#b8b8b8"/><rect x="2" y="8" width="1.2" height="1.2" fill="#b8b8b8"/><rect x="5" y="8" width="1.2" height="1.2" fill="#b8b8b8"/><rect x="8" y="8" width="1.2" height="1.2" fill="#b8b8b8"/></svg>
</body></html>
